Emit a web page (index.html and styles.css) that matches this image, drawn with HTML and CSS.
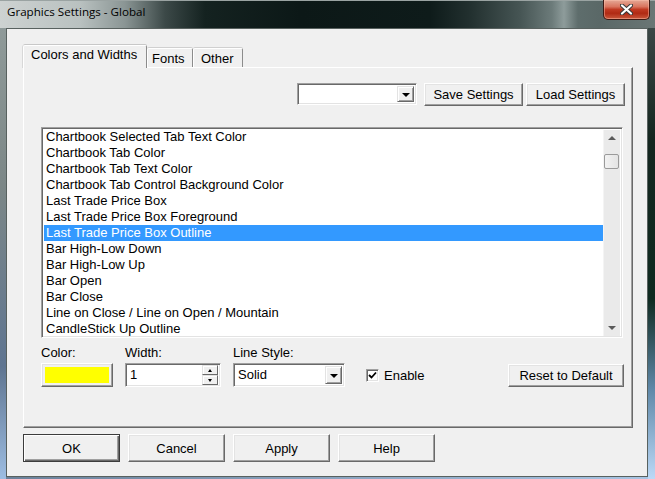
FILE: index.html
```html
<!DOCTYPE html>
<html>
<head>
<meta charset="utf-8">
<link rel="stylesheet" href="styles.css">
</head>
<body>
<div class="window">
  <div class="titlebar">
    <span class="title">Graphics Settings - Global</span>
    <div class="close">
      <svg width="13" height="11" viewBox="0 0 13 11"><path d="M2 1.5 L11 9.5 M11 1.5 L2 9.5" stroke="#3a3a3a" stroke-width="4.2" stroke-linecap="round"/><path d="M2 1.5 L11 9.5 M11 1.5 L2 9.5" stroke="#fff" stroke-width="2.2" stroke-linecap="round"/></svg>
    </div>
  </div>
  <div class="frame-body">
    <div class="client">
      <div class="tabs">
        <div class="tab active">Colors and Widths</div>
        <div class="tab tab-fonts">Fonts</div>
        <div class="tab tab-other">Other</div>
      </div>
      <div class="panel">
        <div class="toprow">
          <div class="combo combo-top">
            <div class="combo-field"></div>
            <div class="combo-btn"><span class="tri-down"></span></div>
          </div>
          <div class="btn btn-save">Save Settings</div>
          <div class="btn btn-load">Load Settings</div>
        </div>
        <div class="listbox">
          <div class="items">
            <div class="item">Chartbook Selected Tab Text Color</div>
            <div class="item">Chartbook Tab Color</div>
            <div class="item">Chartbook Tab Text Color</div>
            <div class="item">Chartbook Tab Control Background Color</div>
            <div class="item">Last Trade Price Box</div>
            <div class="item">Last Trade Price Box Foreground</div>
            <div class="item selected">Last Trade Price Box Outline</div>
            <div class="item">Bar High-Low Down</div>
            <div class="item">Bar High-Low Up</div>
            <div class="item">Bar Open</div>
            <div class="item">Bar Close</div>
            <div class="item">Line on Close / Line on Open / Mountain</div>
            <div class="item">CandleStick Up Outline</div>
          </div>
          <div class="scrollbar">
            <div class="sb-arrow"><span class="sb-up"></span></div>
            <div class="sb-track"><div class="sb-thumb"></div></div>
            <div class="sb-arrow"><span class="sb-down"></span></div>
          </div>
        </div>
        <div class="props">
          <div class="prop prop-color">
            <div class="label">Color:</div>
            <div class="swatch-btn"><div class="swatch"></div></div>
          </div>
          <div class="prop prop-width">
            <div class="label">Width:</div>
            <div class="spin">
              <div class="spin-text">1</div>
              <div class="spin-btns">
                <div class="spin-btn"><span class="mini-up"></span></div>
                <div class="spin-btn"><span class="mini-down"></span></div>
              </div>
            </div>
          </div>
          <div class="prop prop-style">
            <div class="label">Line Style:</div>
            <div class="combo combo-style">
              <div class="combo-field">Solid</div>
              <div class="combo-btn"><span class="tri-down"></span></div>
            </div>
          </div>
          <div class="check-wrap">
            <div class="checkbox">
              <svg width="9" height="9" viewBox="0 0 9 9"><path d="M1 4 L3.5 6.5 L8 1.5" fill="none" stroke="#000" stroke-width="1.8"/></svg>
            </div>
            <span class="check-label">Enable</span>
          </div>
          <div class="btn btn-reset">Reset to Default</div>
        </div>
      </div>
      <div class="buttons">
        <div class="btn btn-big btn-default">OK</div>
        <div class="btn btn-big">Cancel</div>
        <div class="btn btn-big">Apply</div>
        <div class="btn btn-big">Help</div>
      </div>
    </div>
  </div>
</div>
</body>
</html>
```

FILE: styles.css
```css
* { box-sizing: border-box; }
html, body { margin: 0; padding: 0; }
body {
  width: 655px;
  height: 479px;
  overflow: hidden;
  font-family: "Liberation Sans", Arial, sans-serif;
  font-size: 13px;
  color: #000;
  background: #1c2a29;
}
.window {
  width: 655px;
  height: 479px;
  display: flex;
  flex-direction: column;
}
.titlebar {
  height: 28px;
  flex: none;
  display: flex;
  justify-content: space-between;
  align-items: flex-start;
  background: linear-gradient(90deg, #cdd2d1 0, #b9c1c0 80px, #8a9594 125px, #3c4948 165px, #142220 205px, #0c1817 300px, #0e1b1a 430px, #22302f 470px, #465554 520px, #6c7b7a 552px, #8e9c9b 564px, #5e6d6c 578px, #5a6867 600px, #6a7675 655px);
  border-top: 1px solid #9aa3a2;
}
.title {
  font-family: "Open Sans", "Noto Sans", sans-serif;
  font-size: 11.6px;
  line-height: 16px;
  padding: 3px 0 0 7px;
  color: #000;
}
.close {
  width: 47px;
  height: 20px;
  margin: -1px 5px 0 0;
  border: 1px solid #3e1a14;
  border-top: none;
  border-radius: 0 0 5px 5px;
  background: linear-gradient(#e5a996 0, #d9755f 35%, #c03a22 50%, #b02a14 70%, #c9583c 100%);
  box-shadow: inset 0 0 0 1px rgba(255, 200, 180, 0.45);
  display: flex;
  align-items: center;
  justify-content: center;
}
.frame-body {
  flex: 1;
  display: flex;
  padding: 0 7px 2px 6px;
  background:
    linear-gradient(#8f9a99, #7c8787 35%, #5f7591 75%, #9dbde2) left top / 6px 100% no-repeat,
    linear-gradient(#3b4746, #14261f 25%, #0f2a20 60%, #5f88a8 80%, #bcd9f7) right top / 7px 100% no-repeat,
    linear-gradient(90deg, #6b8099, #a9c5e4);
}
.client {
  flex: 1;
  border: 1px solid #58615f;
  background: #f0f0f0;
  padding: 16px 0 0 16px;
  display: flex;
  flex-direction: column;
}

/* Tabs */
.tabs {
  display: flex;
  align-items: flex-end;
  height: 22px;
  position: relative;
  z-index: 2;
}
.tab {
  height: 19px;
  padding: 2px 5px 0 5px;
  background: #f0f0f0;
  border-top: 1px solid #fff;
  border-left: 1px solid #fff;
  border-right: 1px solid #8c8c8c;
  box-shadow: 0 -1px 0 #d0d0d0;
  border-radius: 2px 2px 0 0;
  line-height: 15px;
}
.tab.active {
  height: 23px;
  margin-bottom: -1px;
  width: 124px;
  padding: 1px 0 0 7px;
  box-shadow: 0 -1px 0 #c8c8c8, -1px 0 0 #d8d8d8;
}
.tab-fonts { width: 46px; padding-left: 4px; }
.tab-other { width: 50px; padding-left: 7px; }

.panel {
  width: 610px;
  height: 361px;
  background: #f0f0f0;
  border: 1px solid;
  border-color: #fff #696969 #696969 #fff;
  box-shadow: inset -1px -1px 0 #a0a0a0;
  padding: 15px 7px 0 17px;
  display: flex;
  flex-direction: column;
}
.toprow {
  display: flex;
  justify-content: flex-end;
  align-items: flex-start;
  height: 23px;
}

/* Buttons */
.btn {
  height: 23px;
  background: #f0f0f0;
  border: 1px solid;
  border-color: #fff #696969 #696969 #fff;
  box-shadow: inset -1px -1px 0 #a0a0a0, inset 1px 1px 0 #e3e3e3;
  display: flex;
  align-items: center;
  justify-content: center;
  line-height: 15px;
  white-space: nowrap;
}
.btn-save { width: 99px; margin-left: 7px; }
.btn-load { width: 99px; margin-left: 3px; }

/* Combo */
.combo {
  display: flex;
  background: #fff;
  border: 1px solid;
  border-color: #a0a0a0 #fff #fff #a0a0a0;
  box-shadow: inset 1px 1px 0 #696969, inset -1px -1px 0 #e3e3e3;
  padding: 2px;
}
.combo-top { width: 120px; height: 22px; }
.combo-field {
  flex: 1;
  padding-left: 2px;
  line-height: 17px;
}
.combo-btn {
  width: 17px;
  background: #f0f0f0;
  border: 1px solid;
  border-color: #e3e3e3 #696969 #696969 #e3e3e3;
  box-shadow: inset 1px 1px 0 #fff, inset -1px -1px 0 #a0a0a0;
  display: flex;
  align-items: center;
  justify-content: center;
}
.tri-down {
  width: 0;
  height: 0;
  border-left: 4px solid transparent;
  border-right: 4px solid transparent;
  border-top: 4px solid #000;
  margin-top: 1px;
}

/* List */
.listbox {
  width: 582px;
  height: 211px;
  margin-top: 21px;
  background: #fff;
  border: 1px solid;
  border-color: #a0a0a0 #fff #fff #a0a0a0;
  box-shadow: inset 1px 1px 0 #696969, inset -1px -1px 0 #e3e3e3;
  padding: 1px 2px 1px 2px;
  display: flex;
  overflow: hidden;
}
.items {
  flex: 1;
  overflow: hidden;
}
.item {
  height: 16px;
  line-height: 16px;
  padding-left: 2px;
  white-space: nowrap;
}
.item.selected {
  background: #3399ff;
  color: #fff;
}
.scrollbar {
  width: 17px;
  display: flex;
  flex-direction: column;
  background: #eaeaea;
  border-left: 1px solid #f4f4f4;
  margin-top: 1px;
}
.sb-arrow {
  height: 17px;
  display: flex;
  align-items: center;
  justify-content: center;
}
.sb-up {
  width: 0; height: 0;
  border-left: 4px solid transparent;
  border-right: 4px solid transparent;
  border-bottom: 4px solid #5a5a5a;
  margin-top: -2px;
}
.sb-down {
  width: 0; height: 0;
  border-left: 4px solid transparent;
  border-right: 4px solid transparent;
  border-top: 4px solid #5a5a5a;
}
.sb-track {
  flex: 1;
  padding-top: 7px;
}
.sb-thumb {
  width: 15px;
  height: 15px;
  border: 1px solid #9a9a9a;
  border-radius: 2px;
  background: linear-gradient(90deg, #f2f2f2, #e4e4e4);
}

/* Properties row */
.props {
  display: flex;
  align-items: flex-end;
  margin-top: 7px;
  margin-right: 1px;
}
.prop {
  display: flex;
  flex-direction: column;
}
.label {
  line-height: 15px;
  height: 18px;
  white-space: nowrap;
}
.prop-color { width: 72px; }
.prop-width { width: 96px; margin-left: 12px; }
.prop-style { width: 112px; margin-left: 12px; }
.swatch-btn {
  height: 24px;
  background: #f0f0f0;
  border: 1px solid;
  border-color: #fff #696969 #696969 #fff;
  box-shadow: inset -1px -1px 0 #a0a0a0, inset 1px 1px 0 #e3e3e3;
  padding: 3px;
}
.swatch {
  height: 100%;
  background: #ffff00;
}
.spin {
  height: 24px;
  display: flex;
  background: #fff;
  border: 1px solid;
  border-color: #a0a0a0 #fff #fff #a0a0a0;
  box-shadow: inset 1px 1px 0 #696969, inset -1px -1px 0 #e3e3e3;
  padding: 1px 2px;
}
.spin-text {
  flex: 1;
  padding: 2px 0 0 2px;
  line-height: 16px;
}
.spin-btns {
  width: 16px;
  display: flex;
  flex-direction: column;
}
.spin-btn {
  flex: 1;
  background: #f0f0f0;
  border: 1px solid;
  border-color: #e3e3e3 #696969 #696969 #e3e3e3;
  box-shadow: inset 1px 1px 0 #fff;
  display: flex;
  align-items: center;
  justify-content: center;
}
.mini-up {
  width: 0; height: 0;
  border-left: 2.5px solid transparent;
  border-right: 2.5px solid transparent;
  border-bottom: 3px solid #000;
}
.mini-down {
  width: 0; height: 0;
  border-left: 2.5px solid transparent;
  border-right: 2.5px solid transparent;
  border-top: 3px solid #000;
}
.combo-style { height: 24px; }
.combo-style .combo-field { line-height: 18px; padding-left: 2px; }

.check-wrap {
  height: 24px;
  display: flex;
  align-items: center;
  margin-left: 21px;
}
.checkbox {
  width: 13px;
  height: 13px;
  background: #fff;
  border: 1px solid;
  border-color: #a0a0a0 #fff #fff #a0a0a0;
  box-shadow: inset 1px 1px 0 #696969, inset -1px -1px 0 #e3e3e3;
  display: flex;
  align-items: center;
  justify-content: center;
}
.check-label {
  margin-left: 5px;
  line-height: 15px;
}
.btn-reset {
  width: 116px;
  margin-left: auto;
  height: 23px;
}

/* Bottom buttons */
.buttons {
  display: flex;
  gap: 8px;
  margin-top: 6px;
}
.btn-big {
  width: 97px;
  height: 28px;
}
.btn-default {
  border: 1px solid #3c3c3c;
  box-shadow: inset 1px 1px 0 #fff, inset -1px -1px 0 #696969, inset -2px -2px 0 #a0a0a0;
}
```
